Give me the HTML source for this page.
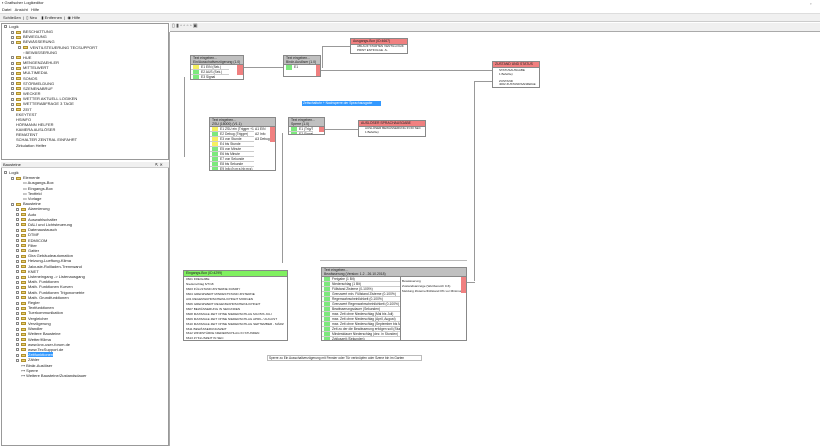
<!DOCTYPE html>
<html><head><meta charset="utf-8"><style>
*{margin:0;padding:0;box-sizing:border-box}
body{width:820px;height:446px;overflow:hidden;background:#fff;font-family:"Liberation Sans",sans-serif;font-size:4px;color:#222;position:relative}
.a{position:absolute}
.t{position:absolute;white-space:nowrap;line-height:5px}
.blk{position:absolute;border:1px solid #888;background:#fff;overflow:hidden}
.hd{background:#c0c0c0;border-bottom:1px solid #888;padding:0 2px;line-height:4px;height:9px;font-size:3.4px;white-space:nowrap;overflow:hidden}
.hd1{height:6px;line-height:5px}
.row{height:5px;line-height:5px;border-bottom:1px solid #ccc;font-size:3.3px;padding-left:10px;position:relative;white-space:nowrap;overflow:hidden}
.g{position:absolute;left:2px;top:0;width:6px;height:5px;background:#7de87d}
.y{position:absolute;left:2px;top:0;width:6px;height:5px;background:#f5f060}
.r{position:absolute;background:#f08080}
.ln{position:absolute;background:#999}
.fold{display:inline-block;width:5px;height:3px;background:#e8d070;border:0.5px solid #b09030;margin-right:2px;vertical-align:middle}
.pl{display:inline-block;width:3px;height:3px;border:0.5px solid #888;margin-right:2px;vertical-align:middle}
</style></head><body>
<div class="t" style="left:2px;top:0px;font-size:4px">▪ Grafischer Logikeditor</div>
<div class="t" style="left:2px;top:7px;font-size:4px">Datei&nbsp;&nbsp;&nbsp;Ansicht&nbsp;&nbsp;&nbsp;Hilfe</div>
<div class="a" style="left:0;top:13px;width:820px;height:9px;background:#f0f0f0;border-top:1px solid #ddd;border-bottom:1px solid #ccc"></div>
<div class="t" style="left:3px;top:15px">Schließen&nbsp;&nbsp;|&nbsp;&nbsp;▯ Neu&nbsp;&nbsp;&nbsp;&nbsp;▮ Entfernen&nbsp;&nbsp;|&nbsp;&nbsp;◉ Hilfe</div>
<div class="t" style="left:810px;top:1px">▫</div>
<div class="a" style="left:1px;top:23px;width:168px;height:137px;border:1px solid #999;background:#fff"></div>
<div class="t" style="left:4px;top:24px;line-height:5.15px">
<div><span class="pl"></span>Logik</div>
<div style="padding-left:7px">
<div><span class="pl"></span><span class="fold"></span>BESCHATTUNG</div>
<div><span class="pl"></span><span class="fold"></span>BEWEGUNG</div>
<div><span class="pl"></span><span class="fold"></span>BEWÄSSERUNG</div>
<div style="padding-left:7px"><span class="pl"></span><span class="fold"></span>VENTILSTEUERUNG TECSUPPORT</div>
<div style="padding-left:12px">▫ BEWÄSSERUNG</div>
<div><span class="pl"></span><span class="fold"></span>HUE</div>
<div><span class="pl"></span><span class="fold"></span>MENGENZAEHLER</div>
<div><span class="pl"></span><span class="fold"></span>MITTELWERT</div>
<div><span class="pl"></span><span class="fold"></span>MULTIMEDIA</div>
<div><span class="pl"></span><span class="fold"></span>SONOS</div>
<div><span class="pl"></span><span class="fold"></span>STÖRMELDUNG</div>
<div><span class="pl"></span><span class="fold"></span>SZENENABRUF</div>
<div><span class="pl"></span><span class="fold"></span>WECKER</div>
<div><span class="pl"></span><span class="fold"></span>WETTER AKTUELL LOGIKEN</div>
<div><span class="pl"></span><span class="fold"></span>WETTERABFRAGE 3 TAGE</div>
<div><span class="pl"></span><span class="fold"></span>ZEIT</div>
<div style="padding-left:5px">EKEYTEST</div>
<div style="padding-left:5px">HSINFO</div>
<div style="padding-left:5px">HÖRMANN HELFER</div>
<div style="padding-left:5px">KAMERA AUSLÖSER</div>
<div style="padding-left:5px">REMATENT</div>
<div style="padding-left:5px">SCHALTER ZENTRAL EINFAHRT</div>
<div style="padding-left:5px">Zirkulation Helfer</div>
</div></div>
<div class="a" style="left:1px;top:162px;width:168px;height:284px;border:1px solid #999;background:#fff"></div>
<div class="a" style="left:1px;top:162px;width:168px;height:6px;background:#f0f0f0;border-bottom:1px solid #ccc"></div>
<div class="t" style="left:3px;top:162px;line-height:6px">Bausteine</div>
<div class="t" style="left:155px;top:162px;line-height:6px">⇱ ✕</div>
<div class="t" style="left:4px;top:170px;line-height:5.2px">
<div><span class="pl"></span>Logik</div>
<div style="padding-left:7px"><span class="pl"></span><span class="fold"></span>Elemente</div>
<div style="padding-left:19px">
<div>▭ Ausgangs-Box</div><div>▭ Eingangs-Box</div><div>▭ Textfeld</div><div>▭ Vorlage</div></div>
<div style="padding-left:7px"><span class="pl"></span><span class="fold"></span>Bausteine</div>
<div style="padding-left:12px">
<div><span class="pl"></span><span class="fold"></span>Alarmierung</div>
<div><span class="pl"></span><span class="fold"></span>Auto</div>
<div><span class="pl"></span><span class="fold"></span>Auswahlschalter</div>
<div><span class="pl"></span><span class="fold"></span>DALI und Lichtsteuerung</div>
<div><span class="pl"></span><span class="fold"></span>Datenaustausch</div>
<div><span class="pl"></span><span class="fold"></span>DTMF</div>
<div><span class="pl"></span><span class="fold"></span>EDMICOM</div>
<div><span class="pl"></span><span class="fold"></span>Filter</div>
<div><span class="pl"></span><span class="fold"></span>Gatter</div>
<div><span class="pl"></span><span class="fold"></span>Gira Gebäudeautomation</div>
<div><span class="pl"></span><span class="fold"></span>Heizung-Lueftung-Klima</div>
<div><span class="pl"></span><span class="fold"></span>Jalousie-Rollladen-Trennwand</div>
<div><span class="pl"></span><span class="fold"></span>KNET</div>
<div><span class="pl"></span><span class="fold"></span>Listeneingang -> Listenausgang</div>
<div><span class="pl"></span><span class="fold"></span>Math. Funktionen</div>
<div><span class="pl"></span><span class="fold"></span>Math. Funktionen Kurven</div>
<div><span class="pl"></span><span class="fold"></span>Math. Funktionen Trigonometrie</div>
<div><span class="pl"></span><span class="fold"></span>Math. Grundfunktionen</div>
<div><span class="pl"></span><span class="fold"></span>Regler</div>
<div><span class="pl"></span><span class="fold"></span>Textfunktionen</div>
<div><span class="pl"></span><span class="fold"></span>Tuerkommunikation</div>
<div><span class="pl"></span><span class="fold"></span>Vergleicher</div>
<div><span class="pl"></span><span class="fold"></span>Verzögerung</div>
<div><span class="pl"></span><span class="fold"></span>Wandler</div>
<div><span class="pl"></span><span class="fold"></span>Weitere Bausteine</div>
<div><span class="pl"></span><span class="fold"></span>Wetter/Klima</div>
<div><span class="pl"></span><span class="fold"></span>www.knx-user-forum.de</div>
<div><span class="pl"></span><span class="fold"></span>www.TecSupport.de</div>
<div><span class="pl"></span><span class="fold"></span><span style="background:#3399ff;color:#fff">Zeitfunktionen</span></div>
<div><span class="pl"></span><span class="fold"></span>Zähler</div>
<div style="padding-left:5px">⊶ Binär-Auslöser</div>
<div style="padding-left:5px">⊶ Sperre</div>
<div style="padding-left:5px">⊶ Weitere Bausteine/Zustandsdauer</div>
</div></div>
<div class="a" style="left:170px;top:23px;width:650px;height:9px;background:#f0f0f0;border-bottom:1px solid #aaa"></div>
<div class="t" style="left:172px;top:24px;font-size:5px;color:#555">▯ ▮ ▫ ▫ ▫ ▫ ▣</div>
<div class="a" style="left:169px;top:32px;width:1px;height:414px;background:#aaa"></div>
<div class="ln" style="left:244px;top:67px;width:40px;height:1px"></div>
<div class="ln" style="left:321px;top:70px;width:172px;height:1px"></div>
<div class="ln" style="left:322px;top:46px;width:1px;height:22px"></div>
<div class="ln" style="left:322px;top:46px;width:28px;height:1px"></div>
<div class="ln" style="left:184px;top:77px;width:1px;height:80px"></div>
<div class="ln" style="left:474px;top:81px;width:1px;height:200px"></div>
<div class="ln" style="left:474px;top:81px;width:18px;height:1px"></div>
<div class="ln" style="left:325px;top:129px;width:33px;height:1px"></div>
<div class="ln" style="left:282px;top:133px;width:1px;height:130px"></div>
<div class="ln" style="left:466px;top:282px;width:9px;height:1px"></div>
<div class="ln" style="left:320px;top:260px;width:147px;height:1px;background:#bbb"></div>
<div class="blk" style="left:190px;top:55px;width:54px;height:25px">
<div class="hd">Text eingeben...<br>Ein/Ausschaltverzögerung (1.0)</div>
<div class="row" style="width:38px"><i class="y"></i>E1 EIN (Sek.)</div>
<div class="row" style="width:38px"><i class="g"></i>E2 AUS (Sek.)</div>
<div class="row" style="width:38px"><i class="g"></i>E3 Signal</div>
<div class="r" style="left:46px;top:9px;width:6px;height:10px"></div></div>
<div class="blk" style="left:283px;top:55px;width:38px;height:22px">
<div class="hd">Text eingeben...<br>Binär-Auslöser (1.0)</div>
<div class="row" style="width:14px;border:0"><i class="g"></i>E1</div>
<div class="r" style="left:32px;top:9px;width:5px;height:12px"></div></div>
<div class="blk" style="left:350px;top:38px;width:58px;height:16px">
<div class="hd hd1" style="background:#f08080">Ausgangs-Box (ID:4667)</div>
<div class="t" style="left:6px;top:6px;font-size:3px;line-height:3.5px">ABLAUF STARTEN VENTILLOGIK<br>PRINT ENTFOLGE -S-</div></div>
<div class="blk" style="left:492px;top:61px;width:48px;height:27px">
<div class="hd hd1" style="background:#f08080">ZUSTAND UND STATUS</div>
<div class="t" style="left:6px;top:7px;font-size:3px;line-height:3.5px">STATUSAUSGABE<br>1 Befehle)<br><br>ZUSTAND<br>4002 ZUSTANDSANZEIGE</div></div>
<div class="a" style="left:302px;top:101px;width:79px;height:5px;background:#3399ff"></div>
<div class="t" style="left:303px;top:101px;color:#fff;font-size:3.3px;line-height:5px">Zeitschaltuhr + Nachsperre der Sprachausgabe</div>
<div class="blk" style="left:209px;top:117px;width:67px;height:54px">
<div class="hd">Text eingeben...<br>ZSU (18000) (V1.1)</div>
<div class="row" style="width:44px"><i class="y"></i>E1 ZSU ein (Trigger +1 sek)</div>
<div class="row" style="width:44px"><i class="g"></i>E2 Debug (Trigger)</div>
<div class="row" style="width:44px"><i class="y"></i>E3 von Stunde</div>
<div class="row" style="width:44px"><i class="y"></i>E4 bis Stunde</div>
<div class="row" style="width:44px"><i class="g"></i>E5 von Minute</div>
<div class="row" style="width:44px"><i class="g"></i>E6 bis Minute</div>
<div class="row" style="width:44px"><i class="g"></i>E7 von Sekunde</div>
<div class="row" style="width:44px"><i class="g"></i>E8 bis Sekunde</div>
<div class="row" style="width:44px"><i class="g"></i>E9 Info (h:m:s hh:m:s)</div>
<div class="t" style="left:45px;top:9px;font-size:3.3px;line-height:5px">A1 EIN<br>A2 Info<br>A3 Debug</div>
<div class="r" style="left:60px;top:9px;width:6px;height:15px"></div></div>
<div class="blk" style="left:288px;top:117px;width:37px;height:18px">
<div class="hd">Text eingeben...<br>Sperre (1.0)</div>
<div class="row" style="width:24px"><i class="g"></i>E1 (Trig/Ten)</div>
<div class="row" style="width:24px;border:0"><i class="g"></i>E2 Signal</div>
<div class="r" style="left:30px;top:9px;width:6px;height:5px"></div></div>
<div class="blk" style="left:358px;top:120px;width:68px;height:17px">
<div class="hd hd1" style="background:#f08080">AUSLÖSER SPRACHAUSGABE</div>
<div class="t" style="left:6px;top:6px;font-size:3px;line-height:3.5px">AUSLÖSER BEWÄSSERUNG IN 60 SEC<br>1 Befehle)</div></div>
<div class="blk" style="left:183px;top:270px;width:105px;height:71px">
<div class="hd hd1" style="background:#80f060">Eingangs-Box (ID:4299)</div>
<div class="t" style="left:2px;top:6px;font-size:3.1px;line-height:4.95px">0601 FREIGABE<br>Niederschlag 6/7/18<br>6603 FÜLLSTAND ZISTERNE DUMMY<br>6604 GRENZWERT MINDESTSTAND ZISTERNE<br>A01 REGENWAHRSCHEINLICHKEIT MORGEN<br>6606 GRENZWERT REGENWAHRSCHEINLICHKEIT<br>6607 BEWÄSSERUNG IN SEKUNDEN<br>6608 MAXIMALE ZEIT OHNE NIEDERSCHLAG MAI BIS JULI<br>6609 MAXIMALE ZEIT OHNE NIEDERSCHLAG APRIL / AUGUST<br>6610 MAXIMALE ZEIT OHNE NIEDERSCHLAG SEPTEMBER - MÄRZ<br>6611 BEWÄSSERUNGSZEIT<br>6612 WINDSTÄRKE NIEDERSCHLAG IN STUNDEN<br>6613 ZYKLUSZEIT IN SEC</div></div>
<div class="blk" style="left:321px;top:267px;width:146px;height:74px">
<div class="hd">Text eingeben...<br>Bewässerung (Version: 1.2 - 26.10.2018)</div>
<div style="width:78px">
<div class="row"><i class="g"></i>Freigabe (1 Bit)</div>
<div class="row"><i class="g"></i>Niederschlag (1 Bit)</div>
<div class="row"><i class="g"></i>Füllstand Zisterne (0-100%)</div>
<div class="row"><i class="g"></i>Grenzwert min. Füllstand Zisterne (0-100%)</div>
<div class="row"><i class="g"></i>Regenwahrscheinlichkeit (0-100%)</div>
<div class="row"><i class="g"></i>Grenzwert Regenwahrscheinlichkeit (0-100%)</div>
<div class="row"><i class="g"></i>Bewässerungsdauer (Sekunden)</div>
<div class="row"><i class="g"></i>max. Zeit ohne Niederschlag (Mai bis Juli)</div>
<div class="row"><i class="g"></i>max. Zeit ohne Niederschlag (April, August)</div>
<div class="row"><i class="g"></i>max. Zeit ohne Niederschlag (September bis März)</div>
<div class="row"><i class="g"></i>Zeit zu der die Bewässerung erfolgen soll (Stunde)</div>
<div class="row"><i class="g"></i>Mindestdauer Niederschlag (dez. in Stunden)</div>
<div class="row" style="border:0"><i class="g"></i>Zykluszeit (Sekunden)</div></div>
<div class="a" style="left:78px;top:9px;width:1px;height:64px;background:#888"></div>
<div class="t" style="left:80px;top:11px;font-size:3.1px;line-height:5px">Bewässerung<br>Zustandsanzeige (Wertbereich 0-6)<br>Meldung Zisterne/Füllstand 0% vor Minimum</div>
<div class="r" style="left:139px;top:9px;width:6px;height:16px"></div></div>
<div class="a" style="left:267px;top:355px;width:155px;height:6px;border:1px solid #bbb"></div>
<div class="t" style="left:269px;top:355px;font-size:3.2px;line-height:6px">Sperre zu Ein Ausschaltverzögerung mit Fenster oder Tür verknüpfen oder Szene bin im Garten</div>
</body></html>
